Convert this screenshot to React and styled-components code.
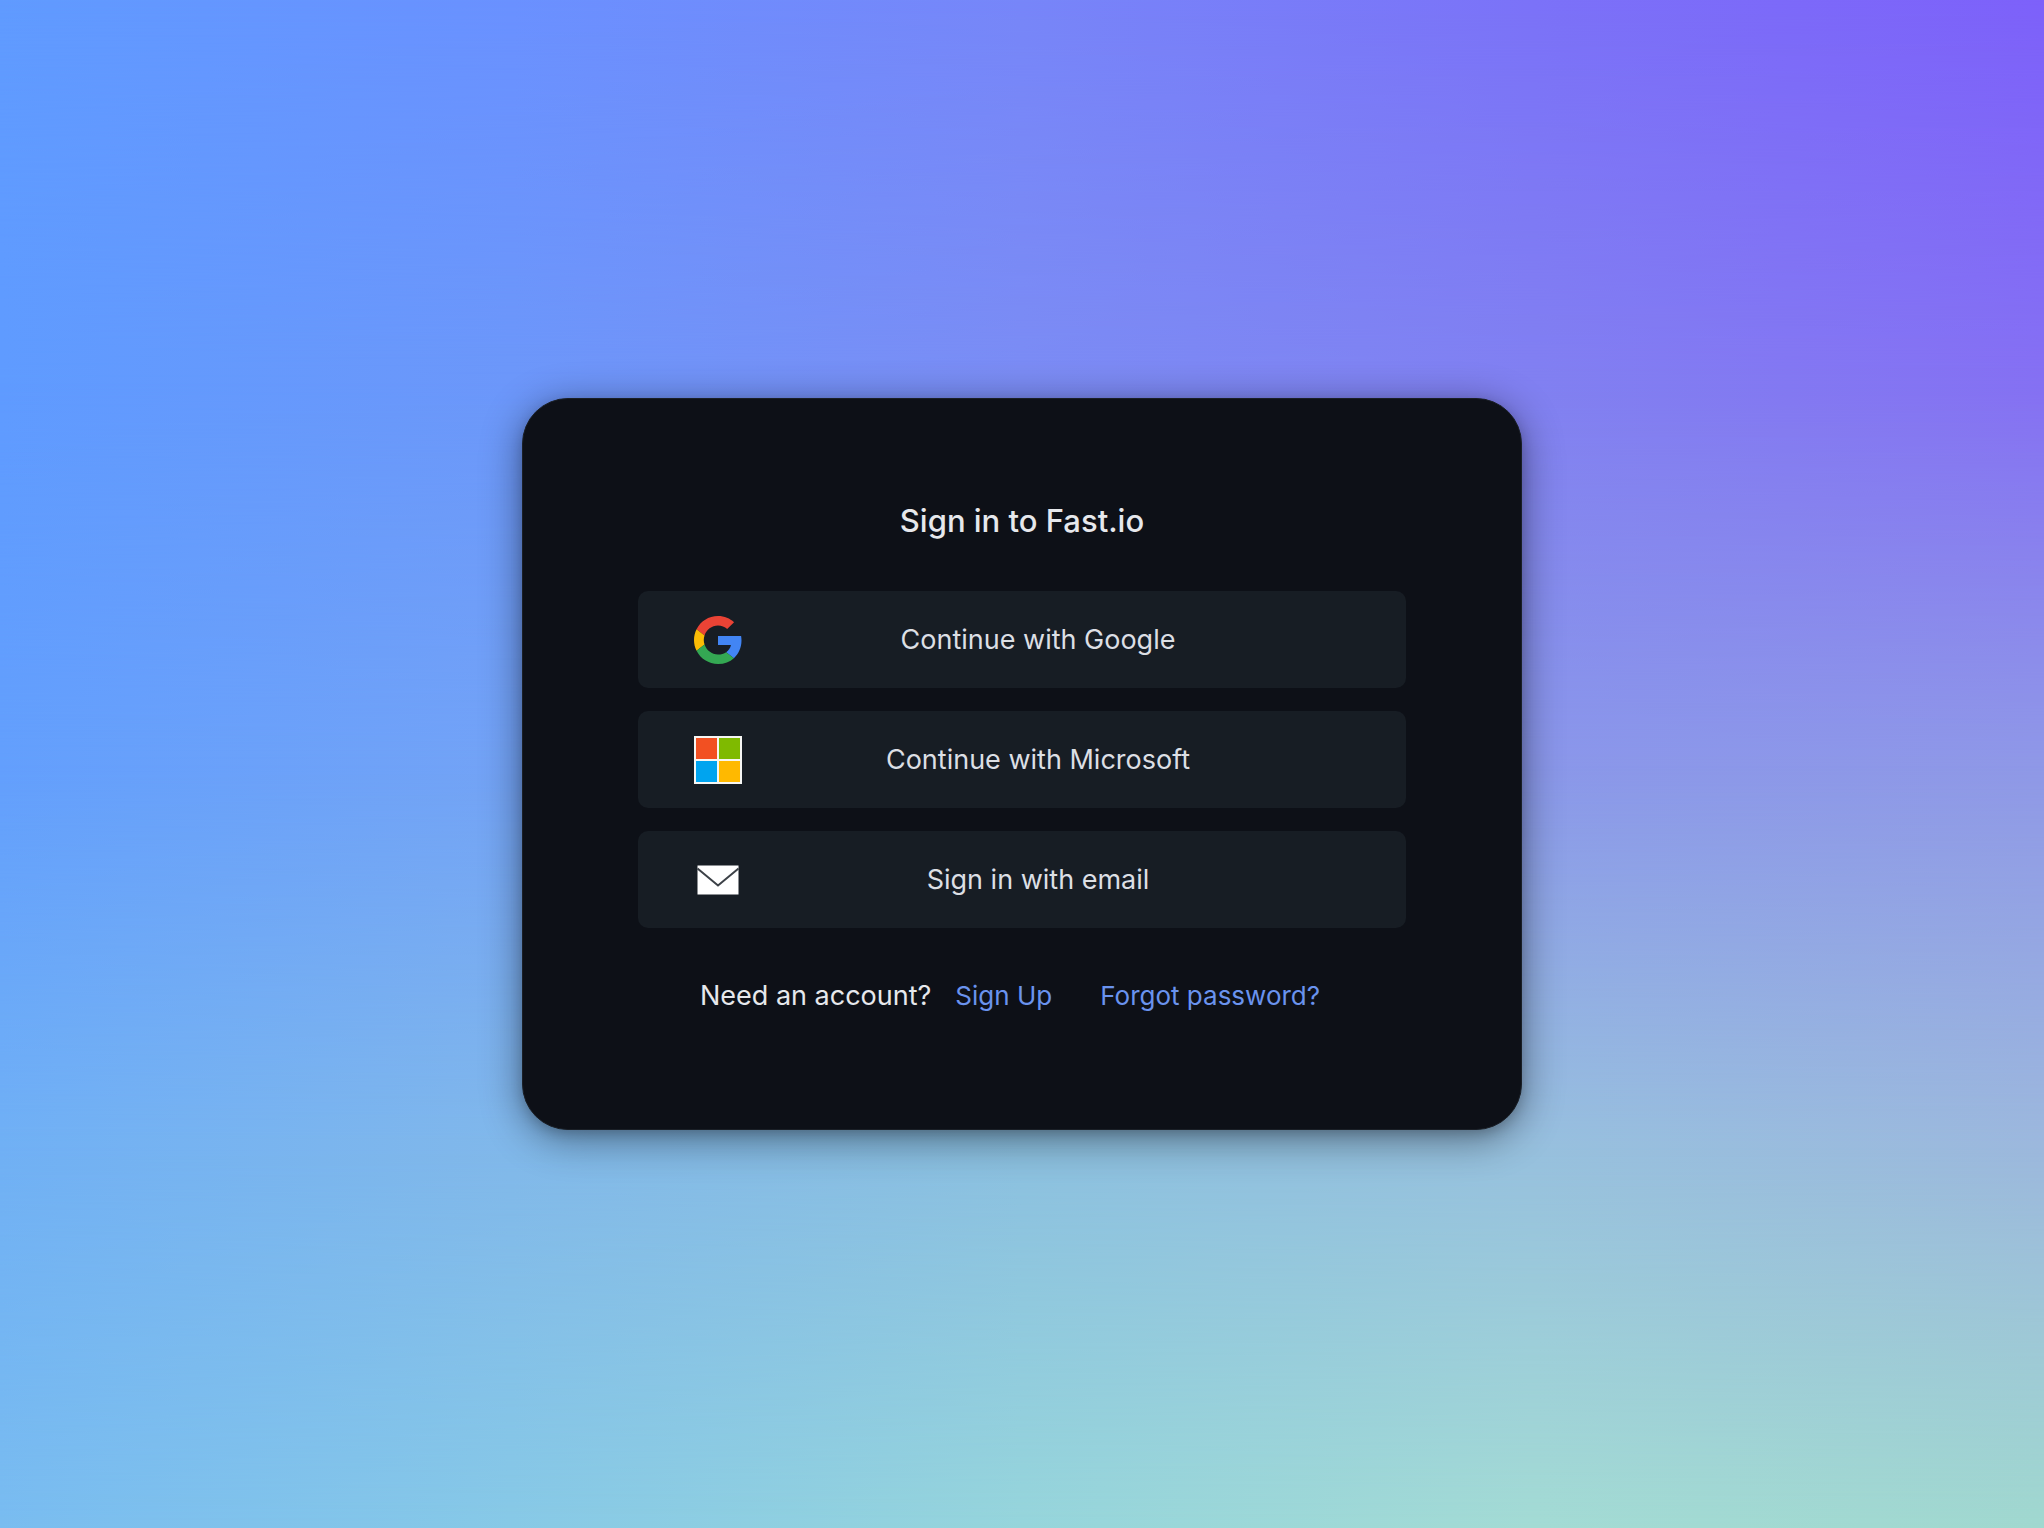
import React from "react";
import styled, { createGlobalStyle } from "styled-components";

const GlobalStyle = createGlobalStyle`
  *, *::before, *::after { box-sizing: border-box; }
  body {
    margin: 0;
    background: #639ffd;
    color: #e6e8ec;
    font-family: Inter, "Liberation Sans", sans-serif;
  }
`;

const Page = styled.main`
  position: relative;
  isolation: isolate;
  min-height: 100vh;
  display: flex;
  align-items: center;
  justify-content: center;
  padding: 24px;
  overflow: hidden;
`;

/* One horizontal band of the backdrop; each fades in over the one above it. */
const Band = styled.div`
  position: absolute;
  inset: 0;
  z-index: -1;
  background: linear-gradient(to right, ${(p) => p.$colors.join(", ")});
  mask-image: ${(p) =>
    p.$to === 0
      ? "none"
      : `linear-gradient(to bottom, transparent ${p.$from}%, #000 ${p.$to}%)`};
`;

const Card = styled.section`
  width: 100%;
  max-width: 1000px;
  padding: 102px 115px 115px;
  border: 1px solid #1a1f26;
  border-radius: 46px;
  background: #0d1017;
  box-shadow: 0 8px 40px rgba(0, 0, 0, 0.45), 0 4px 12px rgba(0, 0, 0, 0.15);
`;

const Title = styled.h1`
  margin: 0 0 50px;
  font-size: 31px;
  line-height: 40px;
  font-weight: 500;
  text-align: center;
`;

const Providers = styled.div`
  display: flex;
  flex-direction: column;
  gap: 23px;
`;

const ProviderButton = styled.button`
  display: flex;
  align-items: center;
  height: 97px;
  padding: 0 72px 0 56px;
  border: 0;
  border-radius: 10px;
  background: #171d24;
  color: #dcdfe4;
  font: inherit;
  font-size: 27px;
  line-height: 36px;
  cursor: pointer;

  svg { flex: none; }
`;

const ButtonLabel = styled.span`
  flex: 1;
  text-align: center;
`;

const Footer = styled.p`
  display: flex;
  flex-wrap: wrap;
  align-items: center;
  justify-content: center;
  margin: 50px 0 0;
  font-size: 27px;
  line-height: 36px;
`;

const FooterLink = styled.a`
  margin: 0 24px;
  color: #6a93ee;
  font-size: 26px;
  text-decoration: none;
`;

const bands = [
  ["#609bff", "#6a91ff", "#7786f9", "#7b72f8", "#7d61fa"],
  ["#5f9bff", "#6c97fa", "#7b8cf4", "#8180f1", "#8570f3"],
  ["#639ffd", "#73a3f6", "#7f9bee", "#8a97ea", "#8f98e7"],
  ["#70b0f5", "#81b8ea", "#8cc0e0", "#97c0de", "#9cb8dd"],
  ["#79bcf0", "#87c9e6", "#96d5db", "#a3dbd4", "#a0d8cf"],
];

function GoogleIcon() {
  return (
    <svg width="48" height="48" viewBox="0 0 48 48" aria-hidden="true">
      <path fill="#EA4335" d="M24 9.5c3.54 0 6.71 1.22 9.21 3.6l6.85-6.85C35.9 2.38 30.47 0 24 0 14.62 0 6.51 5.38 2.56 13.22l7.98 6.19C12.43 13.72 17.74 9.5 24 9.5z" />
      <path fill="#4285F4" d="M47.5 24.55c0-1.57-.15-3.09-.38-4.55H24v9.02h12.94c-.58 2.96-2.26 5.48-4.78 7.18l7.73 6c4.51-4.18 7.61-10.36 7.61-17.65z" />
      <path fill="#FBBC05" d="M10.53 28.59c-.48-1.45-.76-2.99-.76-4.59s.27-3.14.76-4.59l-7.98-6.19C.92 16.46 0 20.12 0 24c0 3.88.92 7.54 2.56 10.78l7.97-6.19z" />
      <path fill="#34A853" d="M24 48c6.48 0 11.93-2.13 15.89-5.81l-7.73-6c-2.15 1.45-4.92 2.3-8.16 2.3-6.26 0-11.57-4.22-13.47-9.91l-7.98 6.19C6.51 42.62 14.62 48 24 48z" />
    </svg>
  );
}

function MicrosoftIcon() {
  return (
    <svg width="48" height="48" viewBox="0 0 48 48" aria-hidden="true">
      <rect width="48" height="48" fill="#f6f6f3" />
      <rect x="2" y="2" width="21" height="21" fill="#f25022" />
      <rect x="25" y="2" width="21" height="21" fill="#7fba00" />
      <rect x="2" y="25" width="21" height="21" fill="#00a4ef" />
      <rect x="25" y="25" width="21" height="21" fill="#ffb900" />
    </svg>
  );
}

function MailIcon() {
  return (
    <svg width="48" height="48" viewBox="0 0 48 48" aria-hidden="true">
      <rect x="3.5" y="9.5" width="41" height="29" fill="#fff" />
      <path d="M3.5 12.5 L24 29.5 L44.5 12.5" fill="none" stroke="#3c4147" strokeWidth="2" />
    </svg>
  );
}

const providers = [
  { label: "Continue with Google", Icon: GoogleIcon },
  { label: "Continue with Microsoft", Icon: MicrosoftIcon },
  { label: "Sign in with email", Icon: MailIcon },
];

export default function App() {
  return (
    <>
      <GlobalStyle />
      <Page>
        {bands.map((colors, i) => (
          <Band key={i} $colors={colors} $from={(i - 1) * 25} $to={i * 25} />
        ))}
        <Card>
          <Title>Sign in to Fast.io</Title>
          <Providers>
            {providers.map(({ label, Icon }) => (
              <ProviderButton key={label} type="button">
                <Icon />
                <ButtonLabel>{label}</ButtonLabel>
              </ProviderButton>
            ))}
          </Providers>
          <Footer>
            <span>Need an account?</span>
            <FooterLink href="#sign-up">Sign Up</FooterLink>
            <FooterLink href="#forgot-password">Forgot password?</FooterLink>
          </Footer>
        </Card>
      </Page>
    </>
  );
}
